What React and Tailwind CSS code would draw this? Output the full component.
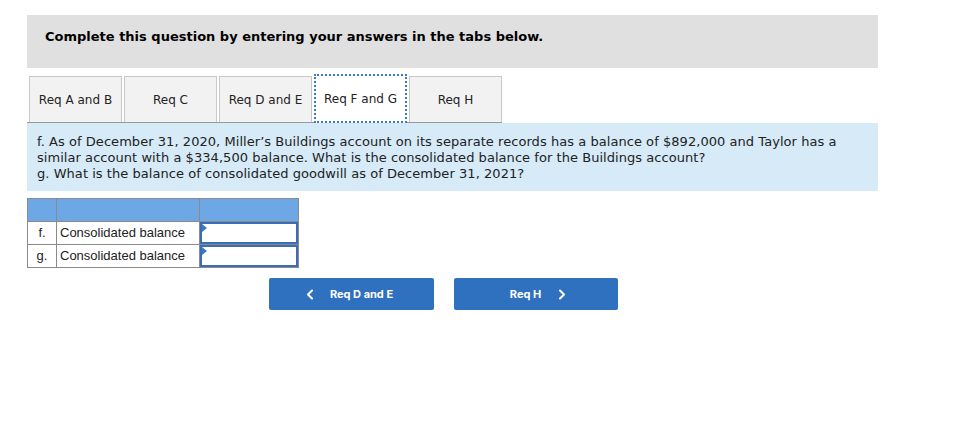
import React from "react";

const tabs = ["Req A and B", "Req C", "Req D and E", "Req F and G", "Req H"];

function Chevron({ dir }) {
  return (
    <svg width="8" height="11" viewBox="0 0 8 11" fill="none">
      <path
        d={dir === "left" ? "M6 1.5 L2 5.5 L6 9.5" : "M2 1.5 L6 5.5 L2 9.5"}
        stroke="white"
        strokeWidth="2"
        strokeLinecap="round"
        strokeLinejoin="round"
      />
    </svg>
  );
}

function InputCell() {
  return (
    <td className="p-0 border border-[#8a8a8a] h-[23px]">
      <div className="relative h-[22px] bg-white border-2 border-[#3a6db6]">
        <div className="absolute left-0 top-0 w-0 h-0 border-t-[4px] border-b-[4px] border-l-[5px] border-t-transparent border-b-transparent border-l-[#3a78c9]" />
      </div>
    </td>
  );
}

export default function App() {
  return (
    <div className="w-[965px] h-[427px] bg-white pl-[27px] pt-[15px] font-['DejaVu_Sans',Verdana,sans-serif] text-[#1a1a1a]">
      <div className="w-[851px] h-[53px] bg-[#e0e0e0] pl-[18px] pt-[14px]">
        <p className="text-[13px] leading-[16px] font-bold text-black">
          Complete this question by entering your answers in the tabs below.
        </p>
      </div>

      <div className="mt-[6px] flex items-end w-[475px] border-b border-[#9a9a9a] pl-[2px] gap-[2px]">
        {tabs.map((t, i) =>
          i === 3 ? (
            <div
              key={t}
              className="w-[93px] h-[49px] -mb-px bg-white border-2 border-dotted border-[#3a78c9] flex items-center justify-center text-[12px] text-[#222]"
            >
              {t}
            </div>
          ) : (
            <div
              key={t}
              className="w-[93px] h-[46px] bg-[#f2f2f2] border border-[#c8c8c8] border-b-0 flex items-center justify-center text-[12px] text-[#222]"
            >
              {t}
            </div>
          )
        )}
      </div>

      <div className="w-[851px] h-[68px] bg-[#d6eaf8] pl-[10px] pt-[11px] text-[13px] leading-[15.8px] tracking-[0.05px] text-[#222]">
        <p>
          f. As of December 31, 2020, Miller’s Buildings account on its separate records has a balance of $892,000 and Taylor has a
          similar account with a $334,500 balance. What is the consolidated balance for the Buildings account?
        </p>
        <p>g. What is the balance of consolidated goodwill as of December 31, 2021?</p>
      </div>

      <table className="mt-[7px] border-collapse font-['Liberation_Sans',Arial,sans-serif] text-[13px] text-[#222]">
        <tbody>
          <tr className="bg-[#6ea7e5] h-[23px]">
            <td className="w-[29px] border border-[#8a8a8a]" />
            <td className="w-[143px] border border-[#8a8a8a]" />
            <td className="w-[99px] border border-[#8a8a8a]" />
          </tr>
          <tr>
            <td className="border border-[#8a8a8a] text-center h-[23px]">f.</td>
            <td className="border border-[#8a8a8a] pl-[3px] whitespace-nowrap">Consolidated balance</td>
            <InputCell />
          </tr>
          <tr>
            <td className="border border-[#8a8a8a] text-center h-[23px]">g.</td>
            <td className="border border-[#8a8a8a] pl-[3px] whitespace-nowrap">Consolidated balance</td>
            <InputCell />
          </tr>
        </tbody>
      </table>

      <div className="mt-[10px] ml-[242px] flex gap-[20px] font-['Inter',sans-serif]">
        <button className="w-[165px] h-[32px] bg-[#2f71bf] rounded-[2px] text-white text-[11px] font-bold flex items-center justify-center gap-[16px] pr-[4px]">
          <Chevron dir="left" />
          <span>Req D and E</span>
        </button>
        <button className="w-[164px] h-[32px] bg-[#2f71bf] rounded-[2px] text-white text-[11px] font-bold flex items-center justify-center gap-[17px] pl-[4px]">
          <span>Req H</span>
          <Chevron dir="right" />
        </button>
      </div>
    </div>
  );
}
